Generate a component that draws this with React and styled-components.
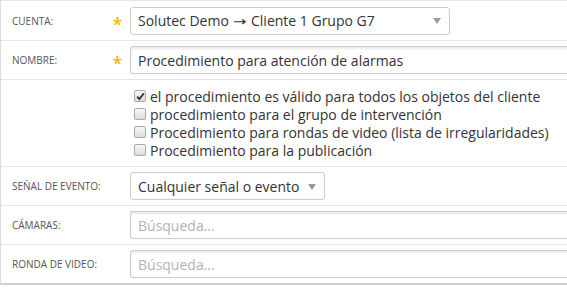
import React from "react";
import styled, { createGlobalStyle } from "styled-components";

const Global = createGlobalStyle`
  html, body { margin: 0; padding: 0; background: #fff; overflow: hidden; }
  body { font-family: "Open Sans", "Noto Sans", sans-serif; }
`;

const Form = styled.div`
  width: 640px;
  border-left: 1px solid #dcdcdc;
  border-top: 1px solid #e6e6e6;
  border-bottom: 2px solid #cfcfcf;
`;

const Row = styled.div`
  display: grid;
  grid-template-columns: 104px 25px 1fr;
  align-items: ${(p) => (p.$top ? "start" : "center")};
  min-height: 39px;
  box-sizing: border-box;
  padding: ${(p) => (p.$top ? "7px 0 7px" : "5px 0")};
  & + & { border-top: 1px solid #e6e6e6; }
`;

const Label = styled.div`
  padding-left: 11px;
  font-size: 10px;
  color: #555;
  text-transform: uppercase;
  white-space: nowrap;
`;

const Star = styled.div`
  color: #f2b705;
  font-size: 18px;
  font-weight: 600;
  text-align: center;
  line-height: 1;
  padding-top: 6px;
`;

const Select = styled.div`
  width: ${(p) => p.$w}px;
  height: 28px;
  box-sizing: border-box;
  border: 1px solid #cccccc;
  border-radius: 3px;
  background: #fff;
  display: flex;
  align-items: center;
  justify-content: space-between;
  padding: 0 8px 0 7px;
  font-size: 14px;
  color: #333;
`;

const Sep = styled.span`
  font-family: "DejaVu Sans", sans-serif;
  font-size: 13px;
  display: inline-block;
  transform: scaleX(1.25);
  margin: 0 2px;
`;

const Arrow = styled.span`
  width: 0;
  height: 0;
  border-left: 4.5px solid transparent;
  border-right: 4.5px solid transparent;
  border-top: 6px solid #9a9a9a;
  margin-top: 1px;
`;

const Input = styled.div`
  width: 460px;
  height: 28px;
  box-sizing: border-box;
  border: 1px solid #cccccc;
  border-right: none;
  border-radius: 3px 0 0 3px;
  box-shadow: inset 0 2px 2px rgba(0, 0, 0, 0.08);
  display: flex;
  align-items: center;
  padding: 0 7px;
  font-size: 14px;
  color: ${(p) => (p.$placeholder ? "#b3b3b3" : "#333")};
`;

const Checks = styled.div`
  grid-column: 3;
  display: flex;
  flex-direction: column;
  padding-left: 4px;
`;

const CheckLine = styled.label`
  display: flex;
  align-items: center;
  height: 18px;
  font-size: 14px;
  color: #333;
  white-space: nowrap;
`;

const Box = styled.span`
  width: 12px;
  height: 12px;
  box-sizing: border-box;
  border: 1px solid #a9a9a9;
  border-radius: 2px;
  background: linear-gradient(#f8f8f8, #dcdcdc);
  margin-right: 4px;
  display: inline-flex;
  align-items: center;
  justify-content: center;
  flex: none;
`;

const Check = ({ checked, children }) => (
  <CheckLine>
    <Box>
      {checked && (
        <svg width="9" height="9" viewBox="0 0 9 9">
          <path d="M1.2 4.6 L3.4 7 L7.8 1.4" fill="none" stroke="#333" strokeWidth="1.8" />
        </svg>
      )}
    </Box>
    {children}
  </CheckLine>
);

export default function App() {
  return (
    <>
      <Global />
      <Form>
        <Row>
          <Label>Cuenta:</Label>
          <Star>*</Star>
          <Select $w={320}>
            <span>Solutec Demo <Sep>→</Sep> Cliente 1 Grupo G7</span>
            <Arrow />
          </Select>
        </Row>
        <Row>
          <Label>Nombre:</Label>
          <Star>*</Star>
          <Input>Procedimiento para atención de alarmas</Input>
        </Row>
        <Row $top>
          <Checks>
            <Check checked>el procedimiento es válido para todos los objetos del cliente</Check>
            <Check>procedimiento para el grupo de intervención</Check>
            <Check>Procedimiento para rondas de video (lista de irregularidades)</Check>
            <Check>Procedimiento para la publicación</Check>
          </Checks>
        </Row>
        <Row>
          <Label>Señal de evento:</Label>
          <span />
          <Select $w={195}>
            <span>Cualquier señal o evento</span>
            <Arrow />
          </Select>
        </Row>
        <Row>
          <Label>Cámaras:</Label>
          <span />
          <Input $placeholder>Búsqueda...</Input>
        </Row>
        <Row>
          <Label>Ronda de video:</Label>
          <span />
          <Input $placeholder>Búsqueda...</Input>
        </Row>
      </Form>
    </>
  );
}
